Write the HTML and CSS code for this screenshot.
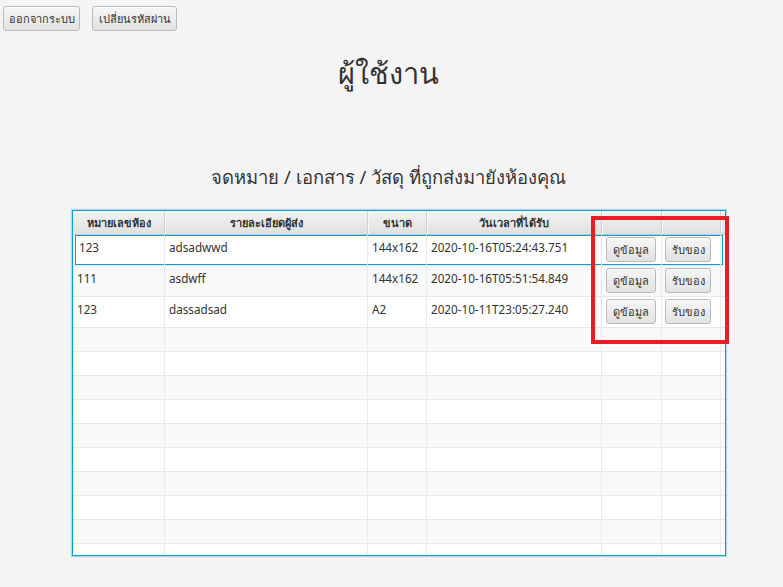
FILE: index.html
```html
<!DOCTYPE html>
<html lang="th">
<head>
<meta charset="utf-8">
<title>ผู้ใช้งาน</title>
<link rel="stylesheet" href="styles.css">
</head>
<body>
<div class="page">
  <div class="topbar">
    <button class="fxbtn top1">ออกจากระบบ</button>
    <button class="fxbtn top2">เปลี่ยนรหัสผ่าน</button>
  </div>
  <h1 class="title">ผู้ใช้งาน</h1>
  <h2 class="subtitle">จดหมาย / เอกสาร / วัสดุ ที่ถูกส่งมายังห้องคุณ</h2>
  <div class="tablewrap">
    <div class="table">
      <div class="row head">
        <div class="c c1">หมายเลขห้อง</div>
        <div class="c c2">รายละเอียดผู้ส่ง</div>
        <div class="c c3">ขนาด</div>
        <div class="c c4">วันเวลาที่ได้รับ</div>
        <div class="c c5"></div>
        <div class="c c6"></div>
        <div class="c cf"></div>
      </div>
      <div class="row data sel">
        <div class="c c1">123</div>
        <div class="c c2">adsadwwd</div>
        <div class="c c3">144x162</div>
        <div class="c c4">2020-10-16T05:24:43.751</div>
        <div class="c c5"><button class="fxbtn small b1">ดูข้อมูล</button></div>
        <div class="c c6"><button class="fxbtn small b2">รับของ</button></div>
        <div class="c cf"></div>
      </div>
      <div class="row data odd">
        <div class="c c1">111</div>
        <div class="c c2">asdwff</div>
        <div class="c c3">144x162</div>
        <div class="c c4">2020-10-16T05:51:54.849</div>
        <div class="c c5"><button class="fxbtn small b1">ดูข้อมูล</button></div>
        <div class="c c6"><button class="fxbtn small b2">รับของ</button></div>
        <div class="c cf"></div>
      </div>
      <div class="row data">
        <div class="c c1">123</div>
        <div class="c c2">dassadsad</div>
        <div class="c c3">A2</div>
        <div class="c c4">2020-10-11T23:05:27.240</div>
        <div class="c c5"><button class="fxbtn small b1">ดูข้อมูล</button></div>
        <div class="c c6"><button class="fxbtn small b2">รับของ</button></div>
        <div class="c cf"></div>
      </div>
      <div class="row empty odd"><div class="c c1"></div><div class="c c2"></div><div class="c c3"></div><div class="c c4"></div><div class="c c5"></div><div class="c c6"></div><div class="c cf"></div></div>
      <div class="row empty"><div class="c c1"></div><div class="c c2"></div><div class="c c3"></div><div class="c c4"></div><div class="c c5"></div><div class="c c6"></div><div class="c cf"></div></div>
      <div class="row empty odd"><div class="c c1"></div><div class="c c2"></div><div class="c c3"></div><div class="c c4"></div><div class="c c5"></div><div class="c c6"></div><div class="c cf"></div></div>
      <div class="row empty"><div class="c c1"></div><div class="c c2"></div><div class="c c3"></div><div class="c c4"></div><div class="c c5"></div><div class="c c6"></div><div class="c cf"></div></div>
      <div class="row empty odd"><div class="c c1"></div><div class="c c2"></div><div class="c c3"></div><div class="c c4"></div><div class="c c5"></div><div class="c c6"></div><div class="c cf"></div></div>
      <div class="row empty"><div class="c c1"></div><div class="c c2"></div><div class="c c3"></div><div class="c c4"></div><div class="c c5"></div><div class="c c6"></div><div class="c cf"></div></div>
      <div class="row empty odd"><div class="c c1"></div><div class="c c2"></div><div class="c c3"></div><div class="c c4"></div><div class="c c5"></div><div class="c c6"></div><div class="c cf"></div></div>
      <div class="row empty"><div class="c c1"></div><div class="c c2"></div><div class="c c3"></div><div class="c c4"></div><div class="c c5"></div><div class="c c6"></div><div class="c cf"></div></div>
      <div class="row empty odd"><div class="c c1"></div><div class="c c2"></div><div class="c c3"></div><div class="c c4"></div><div class="c c5"></div><div class="c c6"></div><div class="c cf"></div></div>
      <div class="row empty"><div class="c c1"></div><div class="c c2"></div><div class="c c3"></div><div class="c c4"></div><div class="c c5"></div><div class="c c6"></div><div class="c cf"></div></div>
    </div>
    <div class="highlight"></div>
  </div>
</div>
</body>
</html>
```
FILE: styles.css
```css
* { box-sizing: border-box; }
html, body { margin: 0; padding: 0; background: #f4f4f4; }
body {
  font-family: "Noto Sans", "Open Sans", sans-serif;
  color: #333333;
  width: 783px;
  height: 587px;
  overflow: hidden;
}
.page { position: relative; }
.topbar {
  display: flex;
  gap: 12px;
  padding: 6px 0 0 3px;
}
.fxbtn {
  font-family: "Noto Sans", "Open Sans", sans-serif;
  font-size: 11px;
  color: #333;
  height: 25px;
  padding: 0;
  border: 1px solid #b9b9b9;
  border-radius: 3px;
  background: linear-gradient(#f6f6f6, #e2e2e2);
  box-shadow: inset 0 1px 0 #ffffff;
  line-height: 23px;
  white-space: nowrap;
  cursor: default;
}
.top1 { width: 77px; }
.top2 { width: 85px; }
.title {
  margin: 20px 0 0 0;
  width: 777px;
  text-align: center;
  font-weight: normal;
  font-size: 29px;
  line-height: 44px;
  color: #333;
}
.subtitle {
  margin: 68px 0 0 0;
  width: 777px;
  text-align: center;
  font-weight: normal;
  font-size: 18.4px;
  line-height: 28px;
  color: #333;
}
.tablewrap {
  position: relative;
  margin: 19px 0 0 72px;
  width: 654px;
  height: 346px;
}
.table {
  width: 654px;
  height: 346px;
  border: 1px solid #039ed3;
  box-shadow: 0 0 1px 1px rgba(3,158,211,0.3);
  background: #ffffff;
  overflow: hidden;
}
.row { display: flex; }
.c {
  flex: none;
  border-right: 1px solid #ebebeb;
  font-size: 11.7px;
  color: #333;
  overflow: hidden;
  white-space: nowrap;
}
.c1 { width: 92px; }
.c2 { width: 203px; }
.c3 { width: 59px; }
.c4 { width: 175px; }
.c5 { width: 60px; }
.c6 { width: 59px; }
.cf { width: 4px; border-right: none; }
.head {
  height: 24px;
  background: linear-gradient(#f3f3f3, #e0e0e0);
  border-bottom: 1px solid #c8c8c8;
}
.head .c {
  border-right: 1px solid #cfcfcf;
  box-shadow: inset 1px 0 0 #f8f8f8;
  font-size: 11px;
  font-weight: bold;
  text-align: center;
  line-height: 23px;
}
.head .cf { border-right: none; }
.data {
  height: 31px;
  border-bottom: 1px solid #e8e8e8;
}
.data .c {
  padding: 3px 0 0 4px;
  line-height: 18px;
}
.data .c5, .data .c6 { padding: 2px 0 0 3px; }
.empty {
  height: 24px;
  border-bottom: 1px solid #e8e8e8;
}
.odd { background: #f9f9f9; }
.sel { box-shadow: inset 0 0 0 1px #039ed3; margin: 0 2px 0 2px; }
.sel .c1 { width: 90px; }
.sel .cf { width: 2px; }
.small {
  height: 25px;
  font-size: 11px;
  padding: 0;
  line-height: 23px;
}
.small.b1 { width: 50px; margin-left: 1px; }
.small.b2 { width: 46px; }
.highlight {
  position: absolute;
  left: 519px;
  top: 6px;
  width: 138px;
  height: 128px;
  border: 4px solid #ec1c24;
  pointer-events: none;
}
```
